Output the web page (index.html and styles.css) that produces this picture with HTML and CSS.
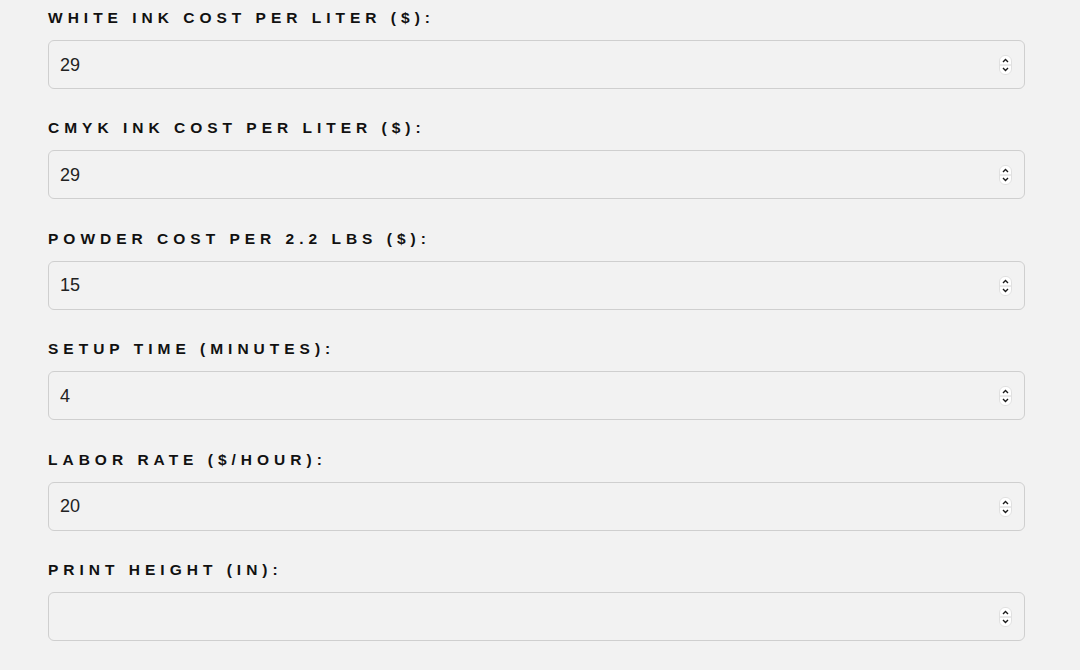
FILE: index.html
```html
<!DOCTYPE html>
<html>
<head>
<meta charset="utf-8">
<link rel="stylesheet" href="styles.css">
</head>
<body>
<main class="form">
  <div class="field">
    <label class="label">White Ink Cost per Liter ($):</label>
    <div class="box"><input class="input" type="text" value="29"><svg class="spin" viewBox="0 0 13 20"><rect x="0.5" y="0.5" width="12" height="19" rx="5.5" fill="#fff" stroke="#e0e0e0"/><line x1="1" y1="10" x2="12" y2="10" stroke="#d4d4d4"/><path d="M4 7 L6.5 4.5 L9 7" fill="none" stroke="#1a1a1a" stroke-width="1.4"/><path d="M4 13 L6.5 15.5 L9 13" fill="none" stroke="#1a1a1a" stroke-width="1.4"/></svg></div>
  </div>
  <div class="field">
    <label class="label">CMYK Ink Cost per Liter ($):</label>
    <div class="box"><input class="input" type="text" value="29"><svg class="spin" viewBox="0 0 13 20"><rect x="0.5" y="0.5" width="12" height="19" rx="5.5" fill="#fff" stroke="#e0e0e0"/><line x1="1" y1="10" x2="12" y2="10" stroke="#d4d4d4"/><path d="M4 7 L6.5 4.5 L9 7" fill="none" stroke="#1a1a1a" stroke-width="1.4"/><path d="M4 13 L6.5 15.5 L9 13" fill="none" stroke="#1a1a1a" stroke-width="1.4"/></svg></div>
  </div>
  <div class="field">
    <label class="label">Powder Cost per 2.2 lbs ($):</label>
    <div class="box"><input class="input" type="text" value="15"><svg class="spin" viewBox="0 0 13 20"><rect x="0.5" y="0.5" width="12" height="19" rx="5.5" fill="#fff" stroke="#e0e0e0"/><line x1="1" y1="10" x2="12" y2="10" stroke="#d4d4d4"/><path d="M4 7 L6.5 4.5 L9 7" fill="none" stroke="#1a1a1a" stroke-width="1.4"/><path d="M4 13 L6.5 15.5 L9 13" fill="none" stroke="#1a1a1a" stroke-width="1.4"/></svg></div>
  </div>
  <div class="field">
    <label class="label">Setup Time (minutes):</label>
    <div class="box"><input class="input" type="text" value="4"><svg class="spin" viewBox="0 0 13 20"><rect x="0.5" y="0.5" width="12" height="19" rx="5.5" fill="#fff" stroke="#e0e0e0"/><line x1="1" y1="10" x2="12" y2="10" stroke="#d4d4d4"/><path d="M4 7 L6.5 4.5 L9 7" fill="none" stroke="#1a1a1a" stroke-width="1.4"/><path d="M4 13 L6.5 15.5 L9 13" fill="none" stroke="#1a1a1a" stroke-width="1.4"/></svg></div>
  </div>
  <div class="field">
    <label class="label">Labor Rate ($/hour):</label>
    <div class="box"><input class="input" type="text" value="20"><svg class="spin" viewBox="0 0 13 20"><rect x="0.5" y="0.5" width="12" height="19" rx="5.5" fill="#fff" stroke="#e0e0e0"/><line x1="1" y1="10" x2="12" y2="10" stroke="#d4d4d4"/><path d="M4 7 L6.5 4.5 L9 7" fill="none" stroke="#1a1a1a" stroke-width="1.4"/><path d="M4 13 L6.5 15.5 L9 13" fill="none" stroke="#1a1a1a" stroke-width="1.4"/></svg></div>
  </div>
  <div class="field">
    <label class="label">Print Height (in):</label>
    <div class="box"><input class="input" type="text" value=""><svg class="spin" viewBox="0 0 13 20"><rect x="0.5" y="0.5" width="12" height="19" rx="5.5" fill="#fff" stroke="#e0e0e0"/><line x1="1" y1="10" x2="12" y2="10" stroke="#d4d4d4"/><path d="M4 7 L6.5 4.5 L9 7" fill="none" stroke="#1a1a1a" stroke-width="1.4"/><path d="M4 13 L6.5 15.5 L9 13" fill="none" stroke="#1a1a1a" stroke-width="1.4"/></svg></div>
  </div>
</main>
</body>
</html>
```

FILE: styles.css
```css
html, body {
  margin: 0;
  background: #f2f2f2;
}
body {
  font-family: "Liberation Sans", Arial, sans-serif;
  overflow: hidden;
}
.form {
  display: flex;
  flex-direction: column;
  gap: 29.4px;
  padding: 8px 0 0 48px;
  width: 977px;
}
.field {
  display: flex;
  flex-direction: column;
  gap: 13px;
}
.label {
  display: block;
  font-size: 15.5px;
  line-height: 19px;
  font-weight: bold;
  text-transform: uppercase;
  letter-spacing: 5px;
  color: #111;
}
.box {
  position: relative;
  height: 49px;
}
.input {
  box-sizing: border-box;
  width: 100%;
  height: 49px;
  margin: 0;
  padding: 1px 11px 0;
  border: 1.5px solid #cfcfcf;
  border-radius: 6px;
  background: #f2f2f2;
  font-family: "Liberation Sans", Arial, sans-serif;
  font-size: 18px;
  color: #222;
  outline: none;
}
.spin {
  position: absolute;
  right: 13px;
  top: 15px;
  width: 13px;
  height: 20px;
}
```
